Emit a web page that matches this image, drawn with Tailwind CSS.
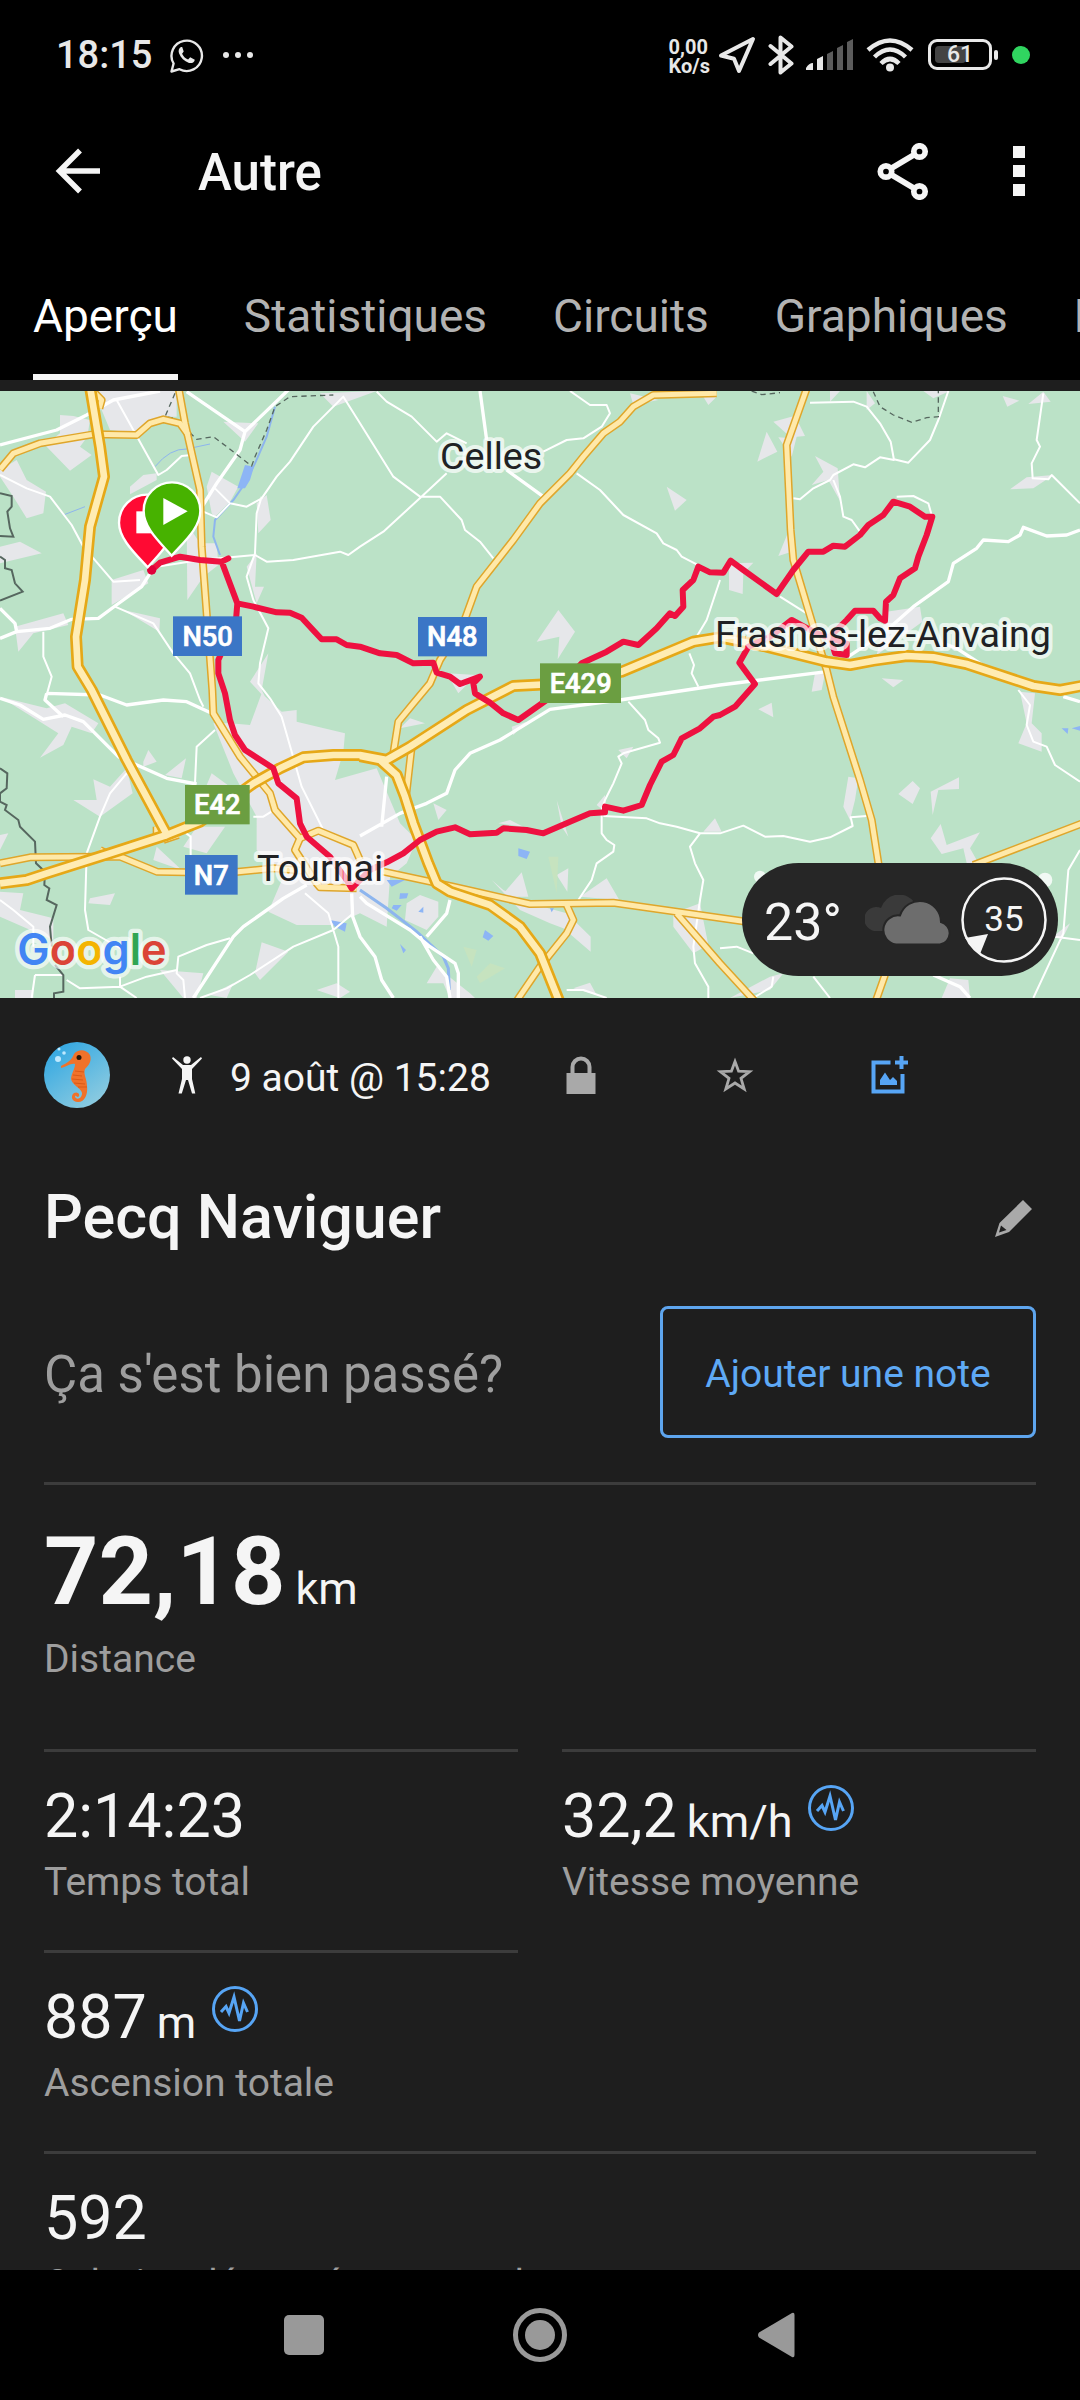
<!DOCTYPE html>
<html lang="fr">
<head>
    <meta charset="UTF-8">
    <meta name="viewport" content="width=device-width, initial-scale=1.0">
    <title>Autre - Pecq Naviguer</title>
    <script src="https://cdn.jsdelivr.net/npm/@tailwindcss/browser@4"></script>
</head>
<body class="flex h-screen flex-col overflow-hidden bg-black font-[Roboto,sans-serif] text-[#f5f5f5]">

    <!-- Status bar -->
    <div class="flex h-[109px] shrink-0 items-center justify-between pl-14 pr-[50px] text-[#e8e8e8]">
        <div class="flex items-center">
            <span class="pt-0.5 text-[38px] font-medium">18:15</span>
            <svg class="ml-[18px] h-[36px] w-[34px]" viewBox="0 0 34 36" fill="none">
                <path d="M1.500 34.500L3.600 26.500A15.200 15.200 0 1 1 9.500 32.200Z" stroke="currentColor" stroke-width="2.400" stroke-linejoin="round"/>
                <path d="M11 10c-2 1-3 3.500-2 6.300 1.800 4.500 5.200 8 10 9.600 3 .8 5.300-.6 5.800-3.200l-4.600-2.500-2.100 2.300c-2.900-1.200-4.800-3.200-6-5.800l1.600-2.200L12.200 10z" fill="currentColor"/>
            </svg>
            <svg class="ml-[18px] h-2 w-8" viewBox="0 0 32 8" fill="currentColor">
                <circle cx="4" cy="4" r="3"/><circle cx="16" cy="4" r="3"/><circle cx="28" cy="4" r="3"/>
            </svg>
        </div>
        <div class="flex items-center">
            <div class="pt-1 text-[20px] leading-[19px] font-bold">0,00<br>Ko/s</div>
            <svg class="ml-2 h-[38px] w-[38px]" viewBox="0 0 38 38" fill="none" stroke="currentColor" stroke-width="4" stroke-linejoin="round">
                <path d="M35 3L3 19.500l13 3.300L21 35z"/>
            </svg>
            <svg class="ml-3 h-10 w-[26px]" viewBox="0 0 26 40" fill="none" stroke="currentColor" stroke-width="4" stroke-linejoin="round" stroke-linecap="round">
                <path d="M2.500 11l21 17.500L12.500 37.500V2.500l11 9L2.500 29"/>
            </svg>
            <svg class="ml-3 h-8 w-[48px]" viewBox="0 0 48 32">
                <path d="M0 31v-2q3-5 7-5v7zM11 31V20l6-3v14z" fill="currentColor"/>
                <path d="M21 31V15l6-3v19zM31 31V9l6-3v25zM41 31V3l6-3v31z" fill="#5c5c5c"/>
            </svg>
            <svg class="ml-3 h-[36px] w-[48px]" viewBox="0 0 48 36" fill="none" stroke="currentColor" stroke-width="4.500">
                <path d="M2 13Q24-6 46 13M8.500 20Q24 5 39.500 20M15 26.500Q24 17.500 33 26.500"/>
                <circle cx="24" cy="30.500" r="4" fill="currentColor" stroke="none"/>
            </svg>
            <div class="relative ml-3.5 flex h-[31px] w-[64px] items-center justify-center rounded-[9px] border-3 border-[#e8e8e8]">
                <span class="absolute top-1 bottom-1 left-1 w-[31px] rounded-sm bg-[#444]"></span>
                <span class="relative pt-0.5 text-[23px] font-medium">61</span>
            </div>
            <span class="ml-0.5 h-2.5 w-1 rounded-sm bg-[#e8e8e8]"></span>
            <span class="ml-3.5 size-[18px] rounded-full bg-[#30d560]"></span>
        </div>
    </div>

    <!-- App bar -->
    <header class="flex h-[124px] shrink-0 items-center px-[55px]">
        <button type="button" aria-label="Retour">
            <svg class="h-[46px] w-[46px]" viewBox="0 0 46 46" fill="none" stroke="currentColor" stroke-width="5.500">
                <path d="M45 23H5M25 2.500L4.500 23 25 43.500"/>
            </svg>
        </button>
        <h1 class="ml-[97px] pt-1 text-[51px] font-medium">Autre</h1>
        <button type="button" aria-label="Partager" class="ml-auto">
            <svg class="h-[57px] w-[52px]" viewBox="0 0 52 57" fill="none" stroke="currentColor" stroke-width="5.700">
                <circle cx="9" cy="28.500" r="5.700"/><circle cx="42.500" cy="8.500" r="5.700"/><circle cx="42.500" cy="48.500" r="5.700"/>
                <path d="M14 25.500L37.500 11.500M14 31.500L37.500 45.500"/>
            </svg>
        </button>
        <button type="button" aria-label="Plus d'options" class="ml-[84px] flex flex-col gap-[7px]">
            <span class="size-3 bg-current"></span>
            <span class="size-3 bg-current"></span>
            <span class="size-3 bg-current"></span>
        </button>
    </header>

    <!-- Tabs -->
    <nav class="flex h-[147px] shrink-0 gap-[66px] overflow-hidden pl-[33px] text-[46px] leading-[66px] whitespace-nowrap text-[#b3b3b3]">
        <a href="#" class="border-b-6 border-[#f5f5f5] pt-[50px] text-white">Aperçu</a>
        <a href="#" class="pt-[50px]">Statistiques</a>
        <a href="#" class="pt-[50px]">Circuits</a>
        <a href="#" class="pt-[50px]">Graphiques</a>
        <a href="#" class="pt-[50px]">Équipement</a>
    </nav>

    <main class="min-h-0 flex-1 overflow-y-auto bg-[#1e1e1e] pt-[11px] [scrollbar-width:none]">

        <!-- Map -->
        <div class="relative">
            <svg class="block w-full" viewBox="0 33 3240 1821">
                <defs>
                    <g id="motorways" fill="none" stroke-linejoin="round">
                        <path d="M270 20L300 200 312 290 270 440 255 600 228 770 233 860 275 930 380 1140 505 1372"/>
                        <path d="M0 1510L80 1500 140 1480 330 1420 500 1365 600 1325 760 1210 840 1165 910 1132 1000 1125 1080 1125 1160 1140 1230 1100 1400 990 1540 918 1700 910 1865 875 2080 785 2160 772 2300 800 2480 845 2550 855 2620 842 2720 828 2800 832 2900 852 3000 885 3100 918 3180 930 3260 915"/>
                        <path d="M1080 1128L1140 1140 1190 1185 1215 1250 1240 1330 1285 1450 1310 1510 1350 1535 1470 1575 1560 1640 1620 1720 1680 1870"/>
                    </g>
                    <g id="mainroads" fill="none" stroke-linejoin="round">
                        <path d="M0 268L40 220 120 190 280 163 410 165 450 130 490 118 540 130 565 165"/>
                        <path d="M535 20L555 130 600 330 605 500 620 700 637 930 640 1000 720 1130 810 1240 825 1290 900 1375 955 1352 1060 1395 1080 1440"/>
                        <path d="M900 1375L885 1410 950 1510 960 1522 1070 1525"/>
                        <path d="M0 1450L90 1432 300 1430 360 1430 470 1475 560 1477M700 1477L820 1465 910 1472"/>
                        <path d="M470 1365L470 1340M490 1380L535 1365M300 1410L320 1420"/>
                        <path d="M2150 40L1960 45 1900 80 1860 125 1810 160 1750 230 1710 280 1620 370 1540 480 1430 620 1390 730 1320 840 1290 910 1240 970 1195 1025 1180 1120"/>
                        <path d="M2422 20L2360 195 2372 450 2380 540 2440 740 2480 870 2500 950 2580 1200 2615 1320 2640 1480"/>
                        <path d="M1150 1475L1290 1505 1360 1520 1590 1572 1840 1568 2030 1595 2240 1625"/>
                        <path d="M2030 1600L2160 1750 2270 1870M1545 1870L1620 1760 1700 1660 1720 1620 1700 1575"/>
                        <path d="M1235 1100L1218 1250M2920 1455L3260 1325M2625 1870L2655 1785"/>
                        <path d="M285 40L305 60 298 85"/>
                    </g>
                </defs>

                <rect y="33" width="3240" height="1821" fill="#bbe2c7"/>

                <!-- built-up areas -->
                <path fill="#e6e7ea" d="M180 105L220 108 270 120 262 170 240 200 275 225 210 272 135 195 180 160zM285 33H530V110L490 110 410 160 330 150 305 90zM0 270L50 240 80 300 138 335 130 400 80 415 40 350 0 290zM0 500L60 485 125 520 0 550zM390 320L430 285 470 280 470 300 390 343zM335 600L430 570 445 610 335 675zM620 320L635 275 715 320 690 365 645 410 635 400zM560 430L600 490 650 490 655 555 610 590 562 660zM670 125L775 130 735 185zM770 370L800 345 812 420 775 460zM740 560L770 520 765 620 792 620 770 670zM370 690L480 715 478 755zM45 740L190 700 205 735 100 760 55 815zM750 905L805 820 785 930 800 960zM960 40L1130 33 1000 80z
                    M2000 320L2060 360 2025 392zM1675 690L1725 755 1673 838 1678 770 1610 785zM1340 880L1430 885 1375 940zM1890 40L1975 60 1900 75zM2110 50L2150 50 2125 75z
                    M2320 125L2385 107 2415 168 2390 170 2375 230 2335 172 2375 175zM2300 155L2332 215 2272 245zM2445 228L2513 265 2520 362 2485 300 2435 315 2470 275zM2490 33H2520L2490 65zM2600 33L2625 70 2600 90zM2770 33H2850L2800 55zM3008 48L3058 62 3022 80zM3085 72L3130 35 3152 65zM3030 328L3080 292 3160 285 3100 325zM2335 528L2365 455 2375 515zM2187 550L2260 548 2230 580 2228 642 2187 630zM2660 695L2760 680 2767 725 2630 825zM2445 880H2475L2465 930 2435 935zM2645 895L2710 900 2680 922zM3060 935L3105 940 3095 1030 3125 1060V1115L3055 1090 3080 1030z
                    M0 950L140 985 195 970 295 1030 275 1060 215 1040 190 1095 120 1133 175 1060 120 1025zM430 1145L445 1110 470 1145 430 1160zM495 1185L558 1135 545 1195zM280 1198L330 1220 380 1165 398 1240 300 1310 220 1260 290 1260zM635 1180L690 1220 620 1215z
                    M785 940L845 995 890 990 890 1025 1035 1060 1030 1115 1005 1200 1130 1165 1200 1330 1250 1380 1220 1450 1170 1490 1160 1640 1080 1600 1000 1635 890 1635 805 1595 850 1490 770 1410 770 1310 700 1180 640 1030 690 1030 750 1035zM0 1365L25 1360 0 1410zM590 1340L675 1340 620 1420 550 1400zM470 1400L545 1470 460 1440zM0 1535L70 1540 60 1590 160 1615 160 1680 0 1610zM270 1555L345 1540 330 1575 265 1570zM785 1687L865 1715 780 1800 765 1780zM480 1770L610 1780 590 1854H550zM45 1830H100V1854H45zM950 1830L1010 1810 1050 1835 1020 1854zM630 1845L700 1810 680 1854z
                    M1200 1045L1230 1015 1275 1030zM1535 1040L1580 1025 1540 1065zM1300 1270L1340 1290 1315 1320zM1670 1260L1705 1370 1685 1340zM1495 1330L1530 1320 1570 1340zM1790 1275L1815 1245 1820 1300zM1855 1110L1900 1100 1880 1135zM1220 1570L1260 1545 1315 1565V1610L1280 1650 1215 1620zM1565 1477L1585 1550 1540 1550 1515 1535zM1475 1500L1510 1530 1590 1570 1700 1600 1772 1670V1715L1690 1645 1650 1630 1560 1590zM1670 1485L1705 1465 1702 1535zM1740 1550L1820 1495 1858 1560zM2110 1355L2145 1315 2165 1355zM2020 1600L2100 1570 2125 1695 2080 1720 2020 1640zM1280 1810L1310 1760 1410 1840 1425 1854H1350L1330 1810zM1720 1825L1770 1808 1790 1845z
                    M2275 988L2315 968 2320 1012zM2545 1190L2575 1195 2565 1260 2550 1320 2530 1280zM2695 1242L2738 1203 2760 1225 2738 1272zM2792 1235L2877 1192V1227L2815 1230 2798 1305zM2792 1375L2822 1332 2840 1395 2940 1357 2910 1405 2935 1449H2900L2890 1405 2825 1422zM2310 1790L2350 1780 2310 1830 2190 1854zM2850 1795L2905 1800 2910 1854H2825zM3165 1665L3210 1630 3185 1680z"/>
                <path fill="#c6e3bf" d="M1645 1430H1675L1670 1540zM1390 1700L1430 1710 1415 1760zM1430 1790L1470 1750 1515 1765 1440 1810z"/>

                <!-- water -->
                <g fill="none" stroke="#8db5ee">
                    <path stroke-width="6" d="M825 80L800 170 765 250 735 310 700 360 645 420 640 470 660 525"/>
                    <path stroke-width="9" d="M1080 1530L1160 1585 1250 1655 1330 1730 1345 1765 1348 1830"/>
                    <path stroke-width="3" d="M465 260Q510 205 560 207L630 192M190 405L255 380"/>
                </g>
                <path fill="#8db5f5" d="M735 255L762 260 750 300 735 325 712 325zM1555 1405L1590 1415 1580 1437 1555 1428zM1160 1500H1215L1175 1520zM1200 1540H1225L1220 1555 1198 1557zM1180 1575H1205L1190 1592 1175 1585zM1455 1650L1480 1668 1465 1682 1448 1672zM1200 1692L1218 1710 1210 1720zM990 1620L1040 1630 1035 1655 1005 1640zM1650 1585H1662L1655 1597zM1255 1595L1270 1580V1598zM3185 1045H3205L3203 1062zM3215 1045L3240 1038V1052z"/>

                <!-- small roads -->
                <g fill="none" stroke="#fff" stroke-width="6" stroke-linejoin="round">
                    <path d="M350 60L475 285 500 270 545 228 575 225M0 285L80 325 150 350 215 435 250 500 340 605 420 600M345 680L460 730 520 820 570 880 600 960 610 980M645 325L690 370 740 380 785 355 830 290 870 245 940 140 1030 50 1080 130 1180 290 1260 350 1320 350 1385 420 1395 450 1440 485 1480 535M610 395L650 412 690 370M785 350L770 400 765 520 740 590 760 660 805 745 780 850 775 910 810 955 845 1010 905 1220 970 1350 1070 1390M470 560L600 540 765 525 800 545 880 540 1020 515 1045 525 1080 500 1150 455 1270 345 1340 280"/>
                    <path d="M130 755L130 830 155 890 140 945M645 1050L590 1100 585 1210M380 1180L330 1240 300 1310 260 1420 255 1590 265 1650 370 1710M105 1785L95 1854M105 1785H190M200 1800L240 1825 360 1820 440 1790 530 1770M360 1790V1820L410 1854M0 1560L40 1590 100 1640V1700M555 1854L550 1800 530 1780 535 1730 620 1695 690 1675M600 1854L680 1825 750 1785 880 1700 1000 1650 1060 1600M915 1540L985 1600 1015 1700 1015 1854M760 1310H790L830 1285M545 1350L572 1370V1430"/>
                    <path d="M1130 35L1160 65 1235 110 1310 185 1340 160 1400 190M1710 33L1770 75 1820 75 1830 100 1805 140 1750 175 1700 180 1630 215M1730 280L1800 330 1870 405 1970 460 1990 490 2030 510 2045 530 2090 553M2160 600L2140 660 2120 720 2090 770M2068 820L2082 855 2075 880 2095 920M1885 965L1935 1020 1945 1050 1975 1075 1980 1088 1870 1120 1855 1130 1865 1150 1840 1210 1815 1260 1805 1290V1360L1820 1380 1843 1395 1840 1415 1790 1450 1775 1500 1735 1560M1810 1308L1940 1315 1980 1330 2030 1340 2100 1360 2160 1360 2230 1337 2295 1370 2350 1368 2430 1385 2490 1372 2558 1338 2552 1312 2600 1308M2100 1360L2070 1400 2085 1450 2110 1500 2100 1560 2080 1700 2085 1750 2125 1820V1854M1700 1830H1750L1820 1854"/>
                    <path d="M2430 68L2560 65 2600 80 2640 130 2672 185 2682 240 2640 232 2595 262 2560 253 2500 285 2490 300 2440 325 2400 358 2380 355M2845 33L2815 120 2790 180 2725 248 2682 238M2500 300L2520 350 2530 410 2555 420 2580 455M3130 40L3110 180 3120 200 3095 250 3098 295 3145 298 3155 285 3240 370M2690 350L2740 348 2785 370 2795 405M2340 650L2420 700M3055 930L3090 975 3080 1035 3100 1085 3140 1100 3165 1155 3240 1205M3240 1410L3205 1470 3190 1660 3100 1854M3165 1670L3240 1680M2160 1705L2210 1700 2260 1720M2440 1790L2490 1854M2320 1790L2315 1820 2260 1854"/>
                </g>
                <g fill="none" stroke="#fff" stroke-width="10" stroke-linejoin="round">
                    <path d="M0 195L170 150 260 105 340 60 480 33M560 35L735 155M870 25L735 155 720 210 650 310 600 390M0 775L50 755 150 745 215 718 295 715 345 678 425 620 450 580M0 685L45 730 50 755M0 955L60 975 130 1018 195 1005 250 1025 355 1130 500 1195 590 1212M140 940L300 945 380 975 490 960 560 965 635 1000M140 940L135 960 190 1010M580 1854L700 1670 730 1640 850 1555 920 1515M1055 1540L1058 1610 1080 1670 1125 1730 1145 1800 1180 1854"/>
                    <path d="M1440 33L1460 180M1520 270L1630 350M1080 1368L1200 1300 1280 1270 1340 1240 1365 1170 1410 1120 1500 1080 1650 988 1860 960 2160 915 2480 875M1160 1190L1145 1340M1080 1550L1100 1570 1230 1650 1290 1700 1365 1750 1375 1780V1854M1260 1670L1300 1740 1340 1790 1350 1854M1350 1560L1340 1600 1280 1670M2830 790L2870 805 2970 870M3240 450L3200 465 3140 468 3070 442 3060 465 3025 485 2950 480 2930 505 2860 550 2845 605 2740 680 2650 760 2545 830M2800 1785L2880 1820 2910 1854M3190 950L3240 965"/>
                </g>

                <!-- borders -->
                <g fill="none" stroke="#56675f" stroke-width="6">
                    <path d="M0 340L35 348V380L22 395 30 445 40 470 0 468M0 530L15 540V565L35 570 45 610 68 635 0 662M0 1165L22 1180 20 1225 0 1240V1265L20 1275 15 1290 55 1320 60 1340 105 1385 108 1450 135 1475 133 1515 148 1525 140 1560 170 1575 150 1640 155 1700M165 1755L190 1785V1835L162 1840V1854"/>
                    <path stroke-width="4" stroke-dasharray="16 12" d="M525 40L495 110 525 115 590 178 640 170 680 200 755 258 765 230 800 150 825 80 870 50 1000 45M2620 35L2640 80 2680 105 2735 127 2780 113 2815 110V33M2255 33L2285 44 2340 38"/>
                </g>

                <use href="#mainroads" stroke="#dfa62b" stroke-width="24"/>
                <use href="#mainroads" stroke="#ffe9a9" stroke-width="15"/>
                <use href="#motorways" stroke="#e6a817" stroke-width="36"/>
                <use href="#motorways" stroke="#ffecb3" stroke-width="20"/>

                <!-- recorded track -->
                <path fill="none" stroke="#ee1140" stroke-width="18" stroke-linejoin="round" stroke-linecap="round" d="M455 570L480 548 540 530 600 540 665 545 685 535M665 545L712 670 708 720 655 840 655 880 675 940 690 1020 705 1065 735 1110 820 1165 835 1210 890 1255 900 1330 920 1370 990 1430 1040 1500 1055 1525M712 670L760 680 830 697 870 698 905 713 965 778 1010 778 1040 795 1080 800 1140 820 1190 825 1240 850 1300 848 1310 878 1350 890 1380 912 1440 890 1420 910 1425 940 1470 968 1510 1000 1555 1020 1640 960 1745 850 1820 815 1870 785 1915 795 1970 745 2010 700 2025 708 2050 680 2048 630 2080 600 2095 560 2130 577 2170 578 2192 542 2230 570 2330 642 2380 570 2425 515 2470 515 2500 497 2535 500 2580 465 2605 435 2650 405 2680 365 2730 380 2775 410 2797 410 2780 465 2755 530 2745 565 2700 595 2680 645 2658 665 2655 722 2640 715 2620 692 2565 692 2540 720 2490 770 2505 820 2540 825M2540 825V790L2450 760 2375 720 2310 770 2245 800 2218 848 2265 912 2205 980 2160 1005 2140 1010 2100 1045 2045 1075 2020 1125 1985 1145 1950 1215 1925 1275 1870 1292 1815 1280 1815 1297 1770 1300 1710 1325 1630 1360 1580 1350 1510 1345 1490 1358 1410 1363 1365 1342 1310 1355 1260 1380 1210 1420 1160 1447 1110 1470 1055 1525"/>
                <circle cx="455" cy="570" r="14" fill="#e0003a"/>
                <g fill="#fff" fill-opacity=".8"><circle cx="2280" cy="1490" r="18"/><circle cx="3135" cy="1500" r="22"/></g>

                <!-- place names -->
                <g font-size="113" fill="#202124" stroke="#fff" stroke-opacity=".7" stroke-width="24" stroke-linejoin="round" paint-order="stroke">
                    <text x="1320" y="268">Celles</text>
                    <text x="2145" y="800">Frasnes-lez-Anvaing</text>
                    <text x="771" y="1503">Tournai</text>
                </g>

                <!-- road numbers -->
                <g fill="#3b76c6">
                    <rect x="519" y="709" width="207" height="119"/>
                    <rect x="1254" y="711" width="207" height="118"/>
                    <rect x="555" y="1425" width="158" height="119"/>
                </g>
                <g fill="#6b9e41">
                    <rect x="1620" y="850" width="243" height="119"/>
                    <rect x="555" y="1215" width="194" height="118"/>
                </g>
                <g font-size="82" font-weight="500" fill="#fff" stroke="#fff" stroke-width="2" text-anchor="middle">
                    <text x="623" y="797">N50</text>
                    <text x="1357" y="799">N48</text>
                    <text x="1742" y="939">E429</text>
                    <text x="652" y="1303">E42</text>
                    <text x="634" y="1514">N7</text>
                </g>

                <!-- start and end pins -->
                <g stroke="#fff" stroke-width="7">
                    <path fill="#ff0a33" d="M443 562C410 525 357 478 357 428A84 84 0 0 1 525 428C525 478 475 525 443 562z"/>
                    <path fill="#fff" stroke="none" d="M409 394H475V460H409z"/>
                    <path fill="#47b200" d="M515 527C480 487 431 445 431 392A85 85 0 0 1 601 392C601 445 550 487 515 527z"/>
                    <path fill="#fff" stroke="none" d="M490 354L563 394 490 435z"/>
                </g>

                <text x="52" y="1755" font-family="Inter, sans-serif" font-size="130" font-weight="600" stroke="#fff" stroke-opacity=".65" stroke-width="26" stroke-linejoin="round" paint-order="stroke"><tspan fill="#4285f4">G</tspan><tspan fill="#db4437">o</tspan><tspan fill="#f4b400">o</tspan><tspan fill="#4285f4">g</tspan><tspan fill="#30a552">l</tspan><tspan fill="#db4437">e</tspan></text>
            </svg>

            <!-- Weather -->
            <div class="absolute right-[22px] bottom-[22px] flex h-[113px] w-[316px] items-center rounded-full bg-[#262626] pl-[22px]">
                <span class="w-[101px] pt-1.5 text-[52px]">23°</span>
                <svg class="h-[50px] w-[86px]" viewBox="0 0 86 50">
                    <path fill="#3a3a3a" d="M12 36A12 12 0 1 1 16 13 19 19 0 0 1 50 8L20 36z"/>
                    <path fill="#6d6d6d" stroke="#262626" stroke-width="2" d="M31 49.500A14.500 14.500 0 1 1 35 20.500 21 21 0 0 1 76 27 11.500 11.500 0 0 1 75 49.500z"/>
                </svg>
                <div class="relative ml-2.5 flex size-[86px] items-center justify-center">
                    <svg class="absolute inset-0 size-full" viewBox="0 0 86 86">
                        <circle cx="43" cy="43" r="41.500" fill="none" stroke="#f5f5f5" stroke-width="2.500"/>
                        <path d="M4 61L27 57 19 77z" fill="#f5f5f5"/>
                    </svg>
                    <span class="relative pt-0.5 text-[35px]">35</span>
                </div>
            </div>
        </div>

        <div class="px-11 pt-11">
            <!-- Activity info -->
            <div class="flex h-[66px] items-center">
                <div class="flex w-[460px] items-center">
                    <svg class="size-[66px] rounded-full" viewBox="0 0 66 66">
                        <defs>
                            <linearGradient id="sea" x1="0" y1="0" x2=".7" y2="1">
                                <stop offset="0" stop-color="#27a3e2"/>
                                <stop offset="1" stop-color="#8ccbe0"/>
                            </linearGradient>
                        </defs>
                        <rect width="66" height="66" fill="url(#sea)"/>
                        <path fill="#f0722a" d="M17 24C23 21 28 18 30 12 34 7 42 7 46 13 48 19 45 23 41 27 39 32 43 37 43 44 44 52 41 60 34 60 28 60 26 54 30 51 34 49 37 53 34 55 32 55 33 53 31 54 31 58 38 58 38 51 37 46 28 43 27 37 27 32 31 27 31 22 27 21 22 25 17 26z"/>
                        <path fill="none" stroke="#d95a18" stroke-width="1" d="M29 33l9 1M28 37l11 1M30 41l11 1M34 45l9 0M31 29l9 1"/>
                        <circle cx="35" cy="15.500" r="2.500" fill="#2a1608"/>
                        <g fill="#bfe9ff"><circle cx="14" cy="17" r="3"/><circle cx="20" cy="11" r="1.800"/><circle cx="15" cy="7" r="1.500"/></g>
                    </svg>
                    <svg class="ml-[62px] h-[38px] w-[30px]" viewBox="0 0 30 38" fill="currentColor">
                        <circle cx="15" cy="4" r="3.700"/>
                        <path d="M1 1L0 2.500 10 13V23L6.500 37.500H9.800L14 24H16L20 37.500H23.300L20 23V13L30 2.500 29 1 19 9H11z"/>
                    </svg>
                    <time class="ml-7 pt-1.5 text-[39px] whitespace-nowrap" datetime="15:28">9 août @ 15:28</time>
                </div>
                <button type="button" aria-label="Confidentialité" class="flex w-[154px] justify-center text-[#a9a9a9]">
                    <svg class="h-[38px] w-[30px]" viewBox="0 0 30 38">
                        <path d="M6.500 19V11a8.500 8.500 0 0 1 17 0v8" fill="none" stroke="currentColor" stroke-width="4"/>
                        <path d="M.5 17H29.500V38H.5z" fill="currentColor"/>
                    </svg>
                </button>
                <button type="button" aria-label="Favori" class="flex w-[154px] justify-center text-[#a9a9a9]">
                    <svg class="h-[36px] w-[38px]" viewBox="0 0 38 36" fill="none" stroke="currentColor" stroke-width="2.800">
                        <path d="M19 4.500L22.600 14.200 33.500 14.700 25 21.300 28.200 32 19 26 9.800 32 13 21.300 4.500 14.700 15.400 14.200z"/>
                    </svg>
                </button>
                <button type="button" aria-label="Ajouter une photo" class="flex w-[154px] justify-center text-[#57a5f5]">
                    <svg class="h-[40px] w-[38px]" viewBox="-1 1 38 40">
                        <path d="M19.500 8.500H2.500V37.500H31.500V20" fill="none" stroke="currentColor" stroke-width="4"/>
                        <path d="M24 8.500H37M30.500 2V15" fill="none" stroke="currentColor" stroke-width="4"/>
                        <path d="M9 31V26L14 18.500 19 26 22 23 26 27V31z" fill="currentColor"/>
                    </svg>
                </button>
            </div>

            <div class="mt-[70px] flex h-20 items-center justify-between pr-1">
                <h2 class="text-[61px] font-medium">Pecq Naviguer</h2>
                <button type="button" aria-label="Modifier le nom">
                    <svg class="size-[37px]" viewBox="0 0 37 37">
                        <path fill="#a9a9a9" fill-rule="evenodd" d="M28 0L37 9 14 32 0 37 4.500 23zM6 25.500L4 32.500 11.500 30z"/>
                    </svg>
                </button>
            </div>

            <div class="mt-12 flex items-center justify-between">
                <p class="pt-1.5 text-[51px] text-[#9e9e9e]">Ça s'est bien passé?</p>
                <button type="button" class="h-[132px] w-[376px] rounded-lg border-3 border-[#5ea5ee] pt-1 text-[39px] text-[#5ea9f5]">Ajouter une note</button>
            </div>

            <!-- Stats -->
            <dl class="mt-11 grid grid-cols-2 gap-x-11">
                <div class="col-span-2 flex flex-col-reverse border-t-3 border-[#3c3c3c] pt-[31px] pb-[67px]">
                    <dt class="mt-2 text-[39px] leading-[46px] text-[#9e9e9e]">Distance</dt>
                    <dd class="h-[112px] text-[95px] leading-[112px] font-bold">72,18<span class="ml-2.5 text-[45px] leading-none font-normal">km</span></dd>
                </div>
                <div class="flex flex-col-reverse border-t-3 border-[#3c3c3c] pt-[29px] pb-[45px]">
                    <dt class="mt-2 text-[39px] leading-[46px] text-[#9e9e9e]">Temps total</dt>
                    <dd class="h-[70px] text-[61px] leading-[70px]">2:14:23</dd>
                </div>
                <div class="flex flex-col-reverse border-t-3 border-[#3c3c3c] pt-[29px] pb-[45px]">
                    <dt class="mt-2 text-[39px] leading-[46px] text-[#9e9e9e]">Vitesse moyenne</dt>
                    <dd class="flex h-[70px] text-[61px] leading-[70px]">
                        <span>32,2<span class="ml-2.5 text-[45px] leading-none">km/h</span></span>
                        <svg class="mt-1 ml-4 size-[46px]" viewBox="0 0 46 46" fill="none" stroke="#57a5f5" stroke-width="3">
                            <circle cx="23" cy="23" r="21.500"/>
                            <path d="M9 26L14 20.500 17 27 22 11 27.500 35 31.500 17 35.500 26"/>
                        </svg>
                    </dd>
                </div>
                <div class="flex flex-col-reverse border-t-3 border-[#3c3c3c] pt-[29px] pb-[45px]">
                    <dt class="mt-2 text-[39px] leading-[46px] text-[#9e9e9e]">Ascension totale</dt>
                    <dd class="flex h-[70px] text-[61px] leading-[70px]">
                        <span>887<span class="ml-2.5 text-[45px] leading-none">m</span></span>
                        <svg class="mt-1 ml-4 size-[46px]" viewBox="0 0 46 46" fill="none" stroke="#57a5f5" stroke-width="3">
                            <circle cx="23" cy="23" r="21.500"/>
                            <path d="M9 26L14 20.500 17 27 22 11 27.500 35 31.500 17 35.500 26"/>
                        </svg>
                    </dd>
                </div>
                <div class="col-span-2 flex flex-col-reverse border-t-3 border-[#3c3c3c] pt-[29px] pb-[45px]">
                    <dt class="mt-2 text-[39px] leading-[46px] text-[#9e9e9e]">Calories dépensées au total</dt>
                    <dd class="h-[70px] text-[61px] leading-[70px]">592</dd>
                </div>
            </dl>
        </div>
    </main>

    <!-- System navigation -->
    <div class="flex h-[130px] shrink-0 justify-center text-[#999]">
        <button type="button" aria-label="Applications récentes" class="flex w-[236px] items-center justify-center">
            <span class="size-10 rounded-[5px] bg-current"></span>
        </button>
        <button type="button" aria-label="Accueil" class="flex w-[236px] items-center justify-center">
            <span class="flex size-[54px] items-center justify-center rounded-full border-5 border-current">
                <span class="size-[30px] rounded-full bg-current"></span>
            </span>
        </button>
        <button type="button" aria-label="Retour" class="flex w-[236px] items-center justify-center">
            <svg class="h-[46px] w-[38px]" viewBox="0 0 38 46" fill="currentColor">
                <path d="M35 1Q37.500 0 37.500 3V43Q37.500 46 35 45L2 25.500Q0 23 2 20.500z"/>
            </svg>
        </button>
    </div>

</body>
</html>
